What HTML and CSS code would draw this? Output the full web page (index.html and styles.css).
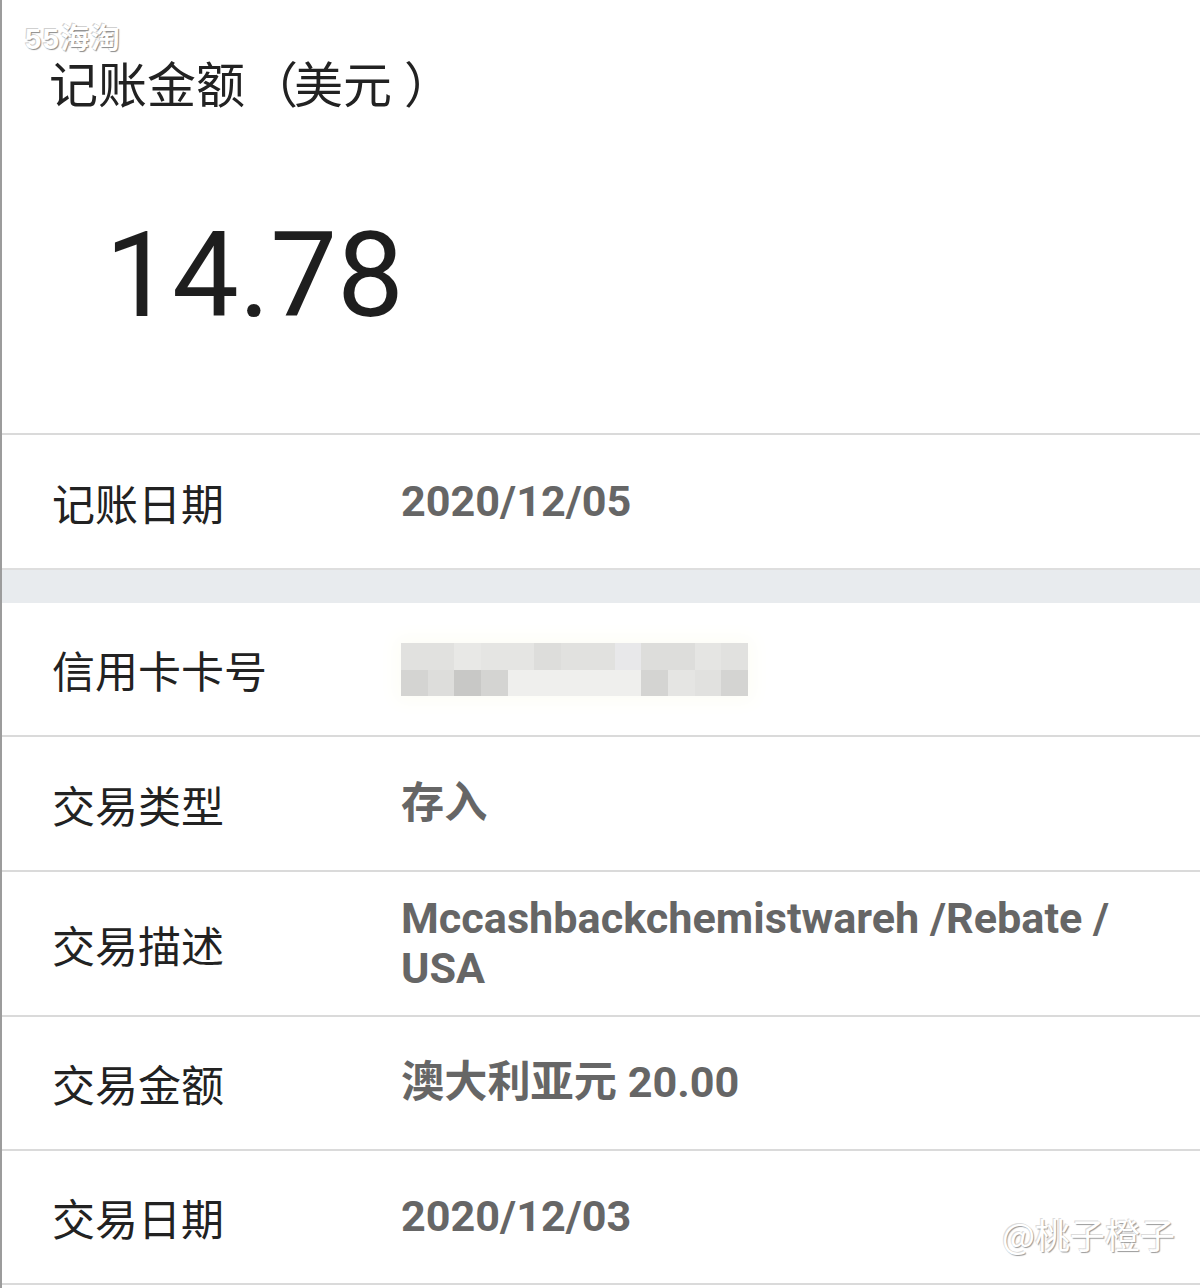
FILE: index.html
```html
<!DOCTYPE html>
<html lang="zh-CN">
<head>
<meta charset="utf-8">
<title>记账金额</title>
<link rel="stylesheet" href="styles.css">
</head>
<body>
<div class="page">
  <div class="wm-top">55海淘</div>
  <section class="amount">
    <h1 class="amount-title">记账金额<span class="paren-open">（</span>美元<span class="paren-close">）</span></h1>
    <div class="amount-value">14.78</div>
  </section>
  <div class="row row-lg">
    <div class="label">记账日期</div>
    <div class="value">2020/12/05</div>
  </div>
  <div class="band"></div>
  <div class="row">
    <div class="label">信用卡卡号</div>
    <div class="value">
      <div class="mosaic">
        <span class="c3"></span><span class="c3"></span><span class="c5"></span><span class="c4"></span><span class="c4"></span><span class="c2"></span><span class="c3"></span><span class="c3"></span><span class="c6"></span><span class="c2"></span><span class="c2"></span><span class="c4"></span><span class="c3"></span>
        <span class="c1"></span><span class="c2"></span><span class="c0"></span><span class="c1"></span><span class="c7"></span><span class="c7"></span><span class="c7"></span><span class="c7"></span><span class="c7"></span><span class="c1"></span><span class="c4"></span><span class="c3"></span><span class="c1"></span>
      </div>
    </div>
  </div>
  <div class="row row-lg">
    <div class="label">交易类型</div>
    <div class="value">存入</div>
  </div>
  <div class="row row-tall">
    <div class="label">交易描述</div>
    <div class="value">Mccashbackchemistwareh /Rebate / USA</div>
  </div>
  <div class="row">
    <div class="label">交易金额</div>
    <div class="value">澳大利亚元 20.00</div>
  </div>
  <div class="row">
    <div class="label">交易日期</div>
    <div class="value">2020/12/03</div>
  </div>
  <div class="wm-bottom">@桃子橙子</div>
</div>
</body>
</html>
```
FILE: styles.css
```css
html, body {
  margin: 0;
  padding: 0;
  background: #ffffff;
}

body {
  font-family: "Noto Sans CJK SC", "Noto Sans", sans-serif;
  color: #222222;
}

.page {
  position: relative;
  width: 1200px;
  height: 1288px;
  box-sizing: border-box;
  border-left: 2px solid #9c9c9c;
  overflow: hidden;
}

.amount {
  border-bottom: 2px solid #dadada;
  padding-left: 47px;
  padding-top: 58px;
  height: 375px;
}

.amount-title {
  margin: 0;
  font-weight: 400;
  font-size: 49px;
  line-height: 48px;
  color: #222222;
}

.paren-open {
  margin-left: 4px;
  margin-right: -4px;
}

.paren-close {
  margin-left: 12px;
}

.amount-value {
  margin-top: 110px;
  padding-left: 56px;
  font-family: Roboto, "Noto Sans", sans-serif;
  font-size: 119px;
  line-height: 120px;
  font-weight: 400;
  color: #1e1e1e;
}

.row {
  display: flex;
  align-items: center;
  height: 132px;
  border-bottom: 2px solid #dadada;
}

.row-lg {
  height: 133px;
}

.row-tall {
  height: 143px;
}

.label {
  width: 399px;
  padding-left: 50px;
  flex: none;
  box-sizing: border-box;
  font-size: 43px;
  line-height: 50px;
  color: #222222;
}

.value {
  flex: 1;
  padding-right: 40px;
  font-family: Roboto, "Noto Sans CJK SC", sans-serif;
  font-weight: 700;
  font-size: 43.2px;
  line-height: 50px;
  color: #666666;
}

.band {
  height: 33px;
  background: #e8ebee;
  border-top: 2px solid #dedede;
  margin-top: -2px;
}

.mosaic {
  display: grid;
  grid-template-columns: repeat(13, 26.7px);
  grid-template-rows: 27px 26px;
  width: 347px;
  box-shadow: 0 0 18px 6px #fdfdf6;
}

.mosaic span { display: block; }
.c0 { background: #c8c8c6; }
.c1 { background: #d4d4d2; }
.c2 { background: #dddddb; }
.c3 { background: #e1e1df; }
.c4 { background: #e5e5e3; }
.c5 { background: #e8e8e6; }
.c6 { background: #e8e8ea; }
.c7 { background: #efefed; }

.wm-top {
  position: absolute;
  left: 23px;
  top: 25px;
  font-family: "Liberation Sans", "Noto Sans CJK SC", sans-serif;
  font-weight: 700;
  font-size: 29px;
  line-height: 28px;
  letter-spacing: 1.5px;
  color: #ffffff;
  text-shadow: 1px 1px 1px #8a8a8a, -1px -1px 0 #d0d0d0;
}

.wm-bottom {
  position: absolute;
  left: 1000px;
  top: 1212px;
  font-family: "Noto Sans CJK SC", sans-serif;
  font-size: 35px;
  line-height: 44px;
  color: #ffffff;
  text-shadow: 1px 1px 1px #9a9a9a, -1px -1px 0 #dcdcdc;
}
```
